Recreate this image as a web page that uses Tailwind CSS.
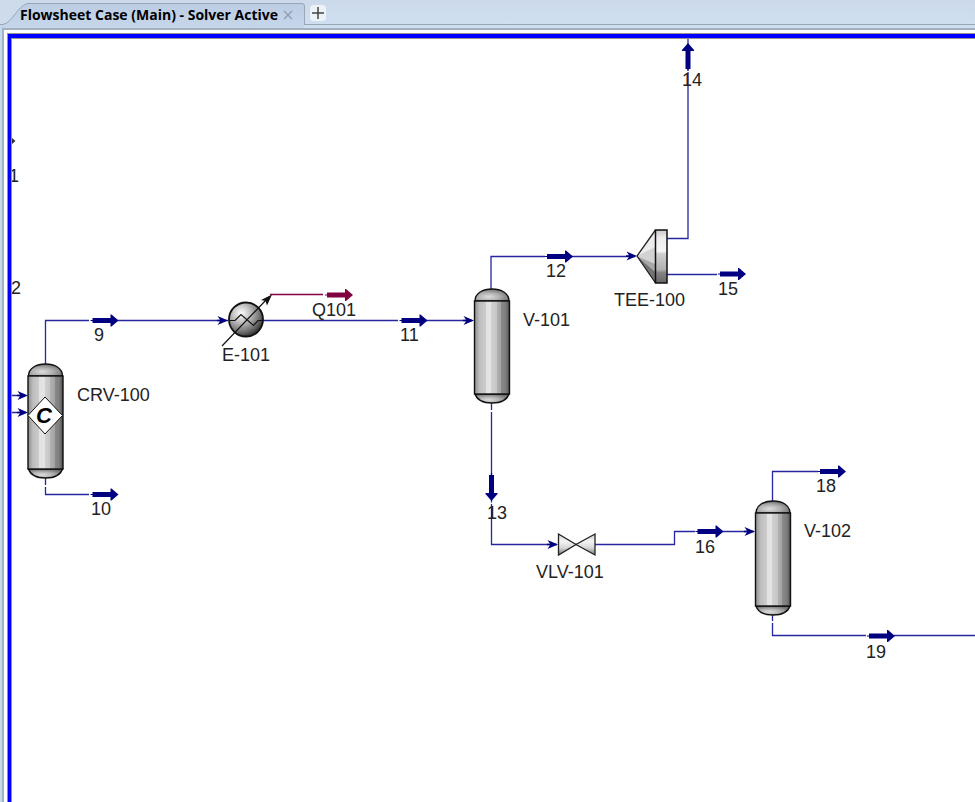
<!DOCTYPE html>
<html lang="en">
<head>
<meta charset="utf-8">
<title>Flowsheet Case (Main)</title>
<script src="https://cdn.jsdelivr.net/npm/@tailwindcss/browser@4"></script>
</head>
<body class="h-screen flex flex-col overflow-hidden bg-[#c4daf0] font-['Liberation_Sans',Arial,sans-serif]">
<header class="relative h-7 shrink-0 flex items-start bg-linear-to-b from-[#ccd9ea] to-[#cfe0f2]">
  <svg class="absolute inset-0 w-full h-full" aria-hidden="true">
    <defs><linearGradient id="tab" x1="0" y1="0" x2="0" y2="1"><stop offset="0" stop-color="#bccde4"/><stop offset="1" stop-color="#c6d6ea"/></linearGradient></defs>
    <path d="M0 24.5H3C12 23 17 7 27 3.5H302Q304.500 3.500 304.500 6V28H0Z" fill="url(#tab)"/>
    <path d="M0 0H27V3.500C17 7 12 23 3 24.500H0Z" fill="#cddbeb"/>
    <path d="M0 24.500H3C12 23 17 7 27 3.500H302Q304.500 3.500 304.500 6V24.500" fill="none" stroke="#98a6b6"/>
    <rect x="304" y="24" width="100%" height="1" fill="#98a6b6"/>
  </svg>
  <nav class="relative flex items-center h-7 pl-5 pt-0.5" aria-label="Flowsheets">
    <button class="font-['Open_Sans',sans-serif] font-bold text-[14px] leading-6 text-black whitespace-nowrap">Flowsheet Case (Main) - Solver Active</button>
    <button class="ml-1 w-3 h-6 flex items-center justify-center" aria-label="Close tab">
      <svg class="w-[10px] h-[10px]" viewBox="0 0 10 10"><path d="M1 1L9 9M9 1L1 9" stroke="#929dad" stroke-width="1.4"/></svg>
    </button>
    <button class="ml-4 w-4 h-4 mb-1 rounded-sm bg-[#edf2f8] flex items-center justify-center" aria-label="New tab">
      <svg class="w-3 h-3" viewBox="0 0 12 12"><path d="M0 6H12M6 0V12" stroke="#444" stroke-width="1.500"/></svg>
    </button>
  </nav>
</header>
<main class="flex-1 min-h-0 flex pl-[2px]">
  <div class="flex-1 min-w-0 flex border-t-2 border-l-2 border-[#a3b0be] bg-white pt-[3px] pl-[3px]">
    <div class="flex-1 min-w-0 flex bg-[#0000ff] border-t border-l border-[#96968c] pt-1 pl-[3px]">
      <div class="relative flex-1 min-w-0 bg-white border-t border-l border-[#96968c] overflow-hidden">
<svg class="absolute inset-0 w-full h-full" role="img" aria-label="Process flowsheet">
<defs>
  <linearGradient id="steel">
    <stop offset="0" stop-color="#8c8c8c"/><stop offset=".08" stop-color="#a8a8a8"/>
    <stop offset=".14" stop-color="#bdbdbd"/><stop offset=".32" stop-color="#cccccc"/>
    <stop offset=".32" stop-color="#e2e2e2"/><stop offset=".48" stop-color="#e4e4e4"/>
    <stop offset=".48" stop-color="#d0d0d0"/><stop offset=".63" stop-color="#c6c6c6"/>
    <stop offset=".63" stop-color="#b2b2b2"/><stop offset=".77" stop-color="#a2a2a2"/>
    <stop offset=".77" stop-color="#8a8a8a"/><stop offset=".9" stop-color="#7c7c7c"/>
    <stop offset="1" stop-color="#4c4c4c"/>
  </linearGradient>
  <radialGradient id="dome" cx=".4" cy=".65" r=".65"><stop offset="0" stop-color="#dedede"/><stop offset=".5" stop-color="#b0b0b0"/><stop offset="1" stop-color="#707070"/></radialGradient>
  <radialGradient id="ball" cx=".36" cy=".32" r=".7"><stop offset="0" stop-color="#ffffff"/><stop offset=".35" stop-color="#c4c4c4"/><stop offset=".75" stop-color="#777"/><stop offset="1" stop-color="#353535"/></radialGradient>
  <linearGradient id="teeBar" x1="0" y1="0" x2="0" y2="1"><stop offset="0" stop-color="#c8c8c8"/><stop offset=".15" stop-color="#ededed"/><stop offset=".4" stop-color="#f5f5f5"/><stop offset=".45" stop-color="#cfcfcf"/><stop offset=".75" stop-color="#b0b0b0"/><stop offset=".8" stop-color="#858585"/><stop offset="1" stop-color="#666"/></linearGradient>
  <linearGradient id="valve" x1="0" y1="0" x2="0" y2="1"><stop offset="0" stop-color="#d0d0d0"/><stop offset=".35" stop-color="#f4f4f4"/><stop offset=".65" stop-color="#d8d8d8"/><stop offset="1" stop-color="#777"/></linearGradient>
  <g id="vessel" stroke="#111" stroke-width="1.400">
    <path d="M-17 -45C-17 -53 -9 -57 0 -57S17 -53 17 -45Z" fill="url(#dome)"/>
    <path d="M-17 48C-15 54 -8 57 0 57S15 54 17 48Z" fill="url(#dome)"/>
    <rect x="-17.500" y="-45" width="35" height="93" fill="url(#steel)"/>
  </g>
  <path id="inlet" d="M0 0L-10.500 -4.500L-8 -.8H-11V.8H-8L-10.500 4.500Z"/>
  <path id="stream" d="M-26 -2.500H-8V-6H-7L0 0L-7 6H-8V2.500H-26ZM-28 -.6H-26V.6H-28Z"/>
</defs>
<g transform="translate(-12 -39)">
  <g fill="none" stroke="#2626a0" stroke-width="1.300">
    <path d="M45.500 364V320.500H89M117 320.500H228"/>
    <path d="M12 395.500H20M12 412.500H20"/>
    <path d="M45.500 478V485M45.500 487V494.500H89"/>
    <path d="M263 320.500H398M426 320.500H472"/>
    <path d="M491 290V256.500H545M571 256.500H635"/>
    <path d="M667 238.500H688V72M688 70V68M688 46V38"/>
    <path d="M667 274.500H717"/>
    <path d="M491.500 403V410M491.500 412V476M491.500 500V502.500M491.500 504V544.500H557"/>
    <path d="M595 544.500H674.500V531.500H695M722 531.500H754"/>
    <path d="M772.500 501V471.500H818"/>
    <path d="M772.500 615V621M772.500 623V635.500H866M894 635.500H2400"/>
    <path d="M270 294.500H323" stroke="#880044"/>
  </g>
  <g fill="#000080">
    <use href="#inlet" x="28" y="395.500"/><use href="#inlet" x="28" y="412.500"/>
    <use href="#inlet" x="228" y="320.500"/><use href="#inlet" x="474" y="320.500"/>
    <use href="#inlet" x="637" y="256"/><use href="#inlet" x="558" y="544.500"/><use href="#inlet" x="755" y="531.500"/>
    <use href="#stream" x="118.500" y="320.500"/><use href="#stream" x="118.500" y="494.500"/>
    <use href="#stream" x="427.500" y="320.500"/><use href="#stream" x="573" y="256.500"/>
    <use href="#stream" x="746" y="274"/><use href="#stream" x="723.500" y="531.500"/>
    <use href="#stream" x="846" y="471.500"/><use href="#stream" x="895" y="636"/>
    <use href="#stream" transform="translate(688 43) rotate(-90)"/>
    <use href="#stream" transform="translate(491.500 501) rotate(90)"/>
  </g>
  <use href="#stream" x="353" y="295" fill="#800040"/>
  <path d="M12 138L15.500 141L12 144Z" fill="#333"/>

  <use href="#vessel" x="45.500" y="421"/>
  <path d="M45 397L62.500 415.500L45 434L28 415.500Z" fill="#fff" stroke="#111"/>
  <use href="#vessel" x="492" y="346"/>
  <use href="#vessel" x="773" y="558"/>

  <circle cx="246" cy="319.500" r="17" fill="url(#ball)" stroke="#111" stroke-width="1.800"/>
  <path d="M229 320.500H235L241 314.500L253.500 325.500L258 320.500H263M222 346L267 299" fill="none" stroke="#111" stroke-width="1.200"/>
  <path d="M272 294.500L261 300L265.500 301L267 305.500Z" fill="#111"/>

  <path d="M637 256L655.500 230V256Z" fill="#ececec"/>
  <path d="M637 256L655.500 247V264Z" fill="#d2d2d2"/>
  <path d="M637 256L655.500 264V272Z" fill="#a8a8a8"/>
  <path d="M637 256L655.500 272V283Z" fill="#747474"/>
  <path d="M655.500 230L637 256L655.500 283" fill="none" stroke="#222" stroke-width="1.300"/>
  <rect x="655.500" y="230" width="11.500" height="53" fill="url(#teeBar)" stroke="#111" stroke-width="1.500"/>
  <path d="M558.500 534L576 544.500L558.500 555ZM595 534L576 544.500L595 555Z" fill="url(#valve)" stroke="#222" stroke-width="1.300"/>

  <text x="44" y="423" text-anchor="middle" class="text-[22px] font-bold italic" fill="#000">C</text>
  <g class="text-[18px]" fill="#222">
    <text x="9" y="182">1</text>
    <text x="11" y="294">2</text>
    <text x="94" y="341">9</text>
    <text x="77" y="401">CRV-100</text>
    <text x="91" y="515">10</text>
    <text x="222" y="361">E-101</text>
    <text x="312" y="316">Q101</text>
    <text x="400" y="341">11</text>
    <text x="546" y="277">12</text>
    <text x="523" y="326">V-101</text>
    <text x="487" y="519">13</text>
    <text x="682" y="86">14</text>
    <text x="614" y="306">TEE-100</text>
    <text x="718" y="295">15</text>
    <text x="536" y="578">VLV-101</text>
    <text x="695" y="553">16</text>
    <text x="816" y="492">18</text>
    <text x="804" y="537">V-102</text>
    <text x="866" y="658">19</text>
  </g>
</g>
</svg>
      </div>
    </div>
  </div>
</main>
</body>
</html>
